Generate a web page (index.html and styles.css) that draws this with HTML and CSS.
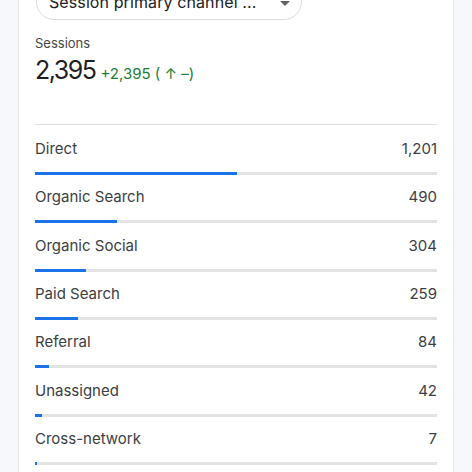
FILE: index.html
```html
<!DOCTYPE html>
<html>
<head>
<meta charset="utf-8">
<link rel="stylesheet" href="styles.css">
</head>
<body>
<div class="card">
  <div class="pill">
    <span class="pill-text">Session primary channel ...</span>
    <span class="caret"></span>
  </div>
  <div class="metric-label">Sessions</div>
  <div class="metric">
    <span class="big">2,395</span>
    <span class="delta">+2,395 ( ↑ –)</span>
  </div>
  <div class="divider"></div>
  <div class="rows">
    <div class="row"><div class="line"><span>Direct</span><span>1,201</span></div><div class="track"><div class="fill" style="width:50.15%"></div></div></div>
    <div class="row"><div class="line"><span>Organic Search</span><span>490</span></div><div class="track"><div class="fill" style="width:20.46%"></div></div></div>
    <div class="row"><div class="line"><span>Organic Social</span><span>304</span></div><div class="track"><div class="fill" style="width:12.69%"></div></div></div>
    <div class="row"><div class="line"><span>Paid Search</span><span>259</span></div><div class="track"><div class="fill" style="width:10.81%"></div></div></div>
    <div class="row"><div class="line"><span>Referral</span><span>84</span></div><div class="track"><div class="fill" style="width:3.51%"></div></div></div>
    <div class="row"><div class="line"><span>Unassigned</span><span>42</span></div><div class="track"><div class="fill" style="width:1.75%"></div></div></div>
    <div class="row"><div class="line"><span>Cross-network</span><span>7</span></div><div class="track"><div class="fill" style="width:0.5%"></div></div></div>
  </div>
</div>
</body>
</html>
```
FILE: styles.css
```css
html, body {
  margin: 0;
  padding: 0;
  background: #f6f8fb;
  font-family: Inter, "Liberation Sans", sans-serif;
  color: #3c4043;
}
body {
  overflow: hidden;
  height: 472px;
}
.card {
  margin: -33px 0 0 18px;
  width: 436px;
  box-sizing: border-box;
  background: #fff;
  border: 1px solid #e4e6ea;
  border-radius: 8px;
  padding: 16px 16px 40px;
}
.pill {
  margin-left: 1px;
  width: 266px;
  height: 36px;
  box-sizing: border-box;
  border: 1px solid #dadce0;
  border-radius: 18px;
  display: flex;
  align-items: center;
  justify-content: space-between;
  padding: 0 11px 0 12px;
}
.pill-text {
  font-size: 16px;
  color: #202124;
  letter-spacing: 0.1px;
}
.caret {
  width: 0;
  height: 0;
  border-left: 5px solid transparent;
  border-right: 5px solid transparent;
  border-top: 5px solid #5f6368;
  margin-top: 2px;
}
.metric-label {
  margin-top: 15px;
  font-size: 13px;
  line-height: 16px;
  color: #444746;
}
.metric {
  margin-top: 4px;
  display: flex;
  align-items: baseline;
  gap: 5px;
  line-height: 30px;
}
.big {
  font-size: 25px;
  font-weight: 400;
  color: #1f1f1f;
  letter-spacing: -1.5px;
}
.delta {
  font-size: 15px;
  color: #188038;
}
.divider {
  margin-top: 35px;
  height: 1px;
  background: #dadce0;
  margin-bottom: 4px;
}
.row {
  padding: 10px 0 2.33px;
}
.line {
  display: flex;
  justify-content: space-between;
  font-size: 15px;
  line-height: 20px;
  color: #3c4043;
}
.track {
  margin-top: 13px;
  height: 3px;
  background: #e3e3e3;
}
.fill {
  height: 3px;
  background: #1a73e8;
}
```
